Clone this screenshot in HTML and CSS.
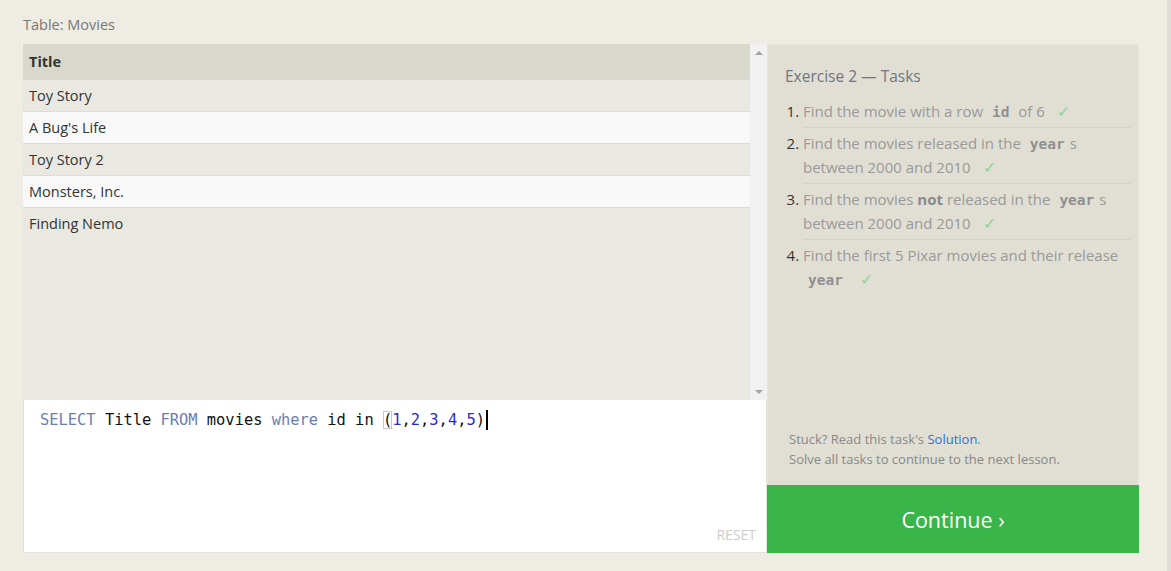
FILE: index.html
```html
<!DOCTYPE html>
<html>
<head>
<meta charset="utf-8">
<link rel="stylesheet" href="styles.css">
</head>
<body>
<div class="page">
  <div class="content">
    <div class="table-label">Table: Movies</div>
    <div class="workspace">
      <div class="left">
        <div class="table-wrap">
          <div class="table">
            <div class="row head">Title</div>
            <div class="row odd">Toy Story</div>
            <div class="row even">A Bug's Life</div>
            <div class="row odd">Toy Story 2</div>
            <div class="row even">Monsters, Inc.</div>
            <div class="row odd last">Finding Nemo</div>
          </div>
          <div class="scrollbar">
            <span class="arrow up"></span>
            <span class="arrow down"></span>
          </div>
        </div>
        <div class="editor">
          <div class="code"><span class="kw">SELECT</span> Title <span class="kw">FROM</span> movies <span class="kw">where</span> id in <span class="br">(</span><span class="num">1</span>,<span class="num">2</span>,<span class="num">3</span>,<span class="num">4</span>,<span class="num">5</span>)<span class="caret"></span></div>
          <div class="reset">RESET</div>
        </div>
      </div>
      <div class="right">
        <div class="tasks">
          <h3 class="tasks-title">Exercise 2 — Tasks</h3>
          <ol class="task-list">
            <li>Find the movie with a row <code>id</code> of 6 <span class="check">✓</span></li>
            <li>Find the movies released in the <code>year</code>s between 2000 and 2010 <span class="check">✓</span></li>
            <li>Find the movies <b>not</b> released in the <code>year</code>s between 2000 and 2010 <span class="check">✓</span></li>
            <li>Find the first 5 Pixar movies and their release <code>year</code> <span class="check">✓</span></li>
          </ol>
          <div class="hint">
            <p>Stuck? Read this task's <a class="link">Solution</a>.</p>
            <p>Solve all tasks to continue to the next lesson.</p>
          </div>
        </div>
        <div class="continue">Continue ›</div>
      </div>
    </div>
  </div>
  <div class="edge"></div>
</div>
</body>
</html>
```
FILE: styles.css
```css
html, body {
  margin: 0;
  padding: 0;
  height: 100%;
}
body {
  background: #efece4;
  font-family: "Open Sans", "Noto Sans", sans-serif;
  color: #333;
}
.page {
  display: flex;
  height: 571px;
}
.content {
  flex: 1;
  padding: 14px 0 0 23px;
}
.edge {
  width: 4px;
  background: #e0ddd8;
}
.table-label {
  font-size: 14.5px;
  color: #777;
  line-height: 22px;
  margin-bottom: 8px;
}
.workspace {
  display: flex;
  width: 1116px;
  height: 509px;
}
.left {
  width: 744px;
  display: flex;
  flex-direction: column;
}
.table-wrap {
  height: 356px;
  display: flex;
  background: #eae9e1;
}
.table {
  flex: 1;
}
.row {
  height: 31px;
  line-height: 31px;
  padding-left: 6px;
  font-size: 14.5px;
  color: #333;
  border-bottom: 1px solid #dddcd5;
}
.row.head {
  height: 36px;
  line-height: 36px;
  background: #d9d8cc;
  font-weight: 700;
  border-bottom: none;
}
.row.odd { background: #eae9e1; }
.row.even { background: #f8f8f8; }
.row.last { border-bottom: none; }
.scrollbar {
  width: 17px;
  background: #f1f1f1;
  display: flex;
  flex-direction: column;
  justify-content: space-between;
  align-items: center;
  padding: 7px 0 6px;
  box-sizing: border-box;
}
.arrow {
  width: 0;
  height: 0;
  border-left: 4px solid transparent;
  border-right: 4px solid transparent;
}
.arrow.up { border-bottom: 4px solid #a3a3a3; }
.arrow.down { border-top: 4px solid #a3a3a3; }
.editor {
  flex: 1;
  background: #fff;
  border: 1px solid #e3e1da;
  border-top: none;
  display: flex;
  flex-direction: column;
  justify-content: space-between;
  padding: 9px 10px 8px 16px;
}
.code {
  font-family: "DejaVu Sans Mono", "Liberation Mono", monospace;
  font-size: 15.4px;
  line-height: 22px;
  color: #111;
  white-space: pre;
}
.kw { color: #6b7db3; }
.num { color: #2a2ad0; }
.br {
  outline: 1px solid #c8c8c8;
  outline-offset: -1px;
}
.caret {
  display: inline-block;
  width: 2px;
  height: 20px;
  background: #000;
  margin-left: 1px;
  vertical-align: -5px;
}
.reset {
  align-self: flex-end;
  font-size: 14px;
  color: #cccccc;
}
.right {
  width: 372px;
  display: flex;
  flex-direction: column;
}
.tasks {
  flex: 1;
  background: #e1dfd4;
  border: 1px solid #e6e4da;
  border-bottom: none;
  padding: 20px 7px 16px 17px;
  display: flex;
  flex-direction: column;
}
.tasks-title {
  margin: 0 0 9px;
  font-size: 15.5px;
  font-weight: 400;
  color: #6e7684;
  line-height: 22px;
}
.task-list {
  margin: 0;
  padding-left: 18px;
  flex: 1;
  font-size: 15px;
  color: #999;
}
.task-list li {
  line-height: 24px;
  padding: 3px 0 4px;
  border-bottom: 1px solid #d5d3c8;
}
.task-list li:last-child { border-bottom: none; }
.task-list li::marker { color: #333; }
.task-list code {
  font-family: "DejaVu Sans Mono", "Liberation Mono", monospace;
  font-weight: 700;
  font-size: 14.5px;
  line-height: 1;
  color: #8f8f8f;
  padding: 0 5px;
}
.task-list b { color: #8a8a8a; }
.check {
  color: #8fd39b;
  font-size: 16px;
  line-height: 1;
  margin-left: 8px;
}
.hint {
  padding-left: 4px;
}
.hint p {
  margin: 0;
  font-size: 13px;
  line-height: 20px;
  color: #888;
}
.link { color: #2f6fd6; }
.continue {
  height: 68px;
  background: #3ab54a;
  color: #fff;
  font-size: 21.5px;
  display: flex;
  align-items: center;
  justify-content: center;
}
```
